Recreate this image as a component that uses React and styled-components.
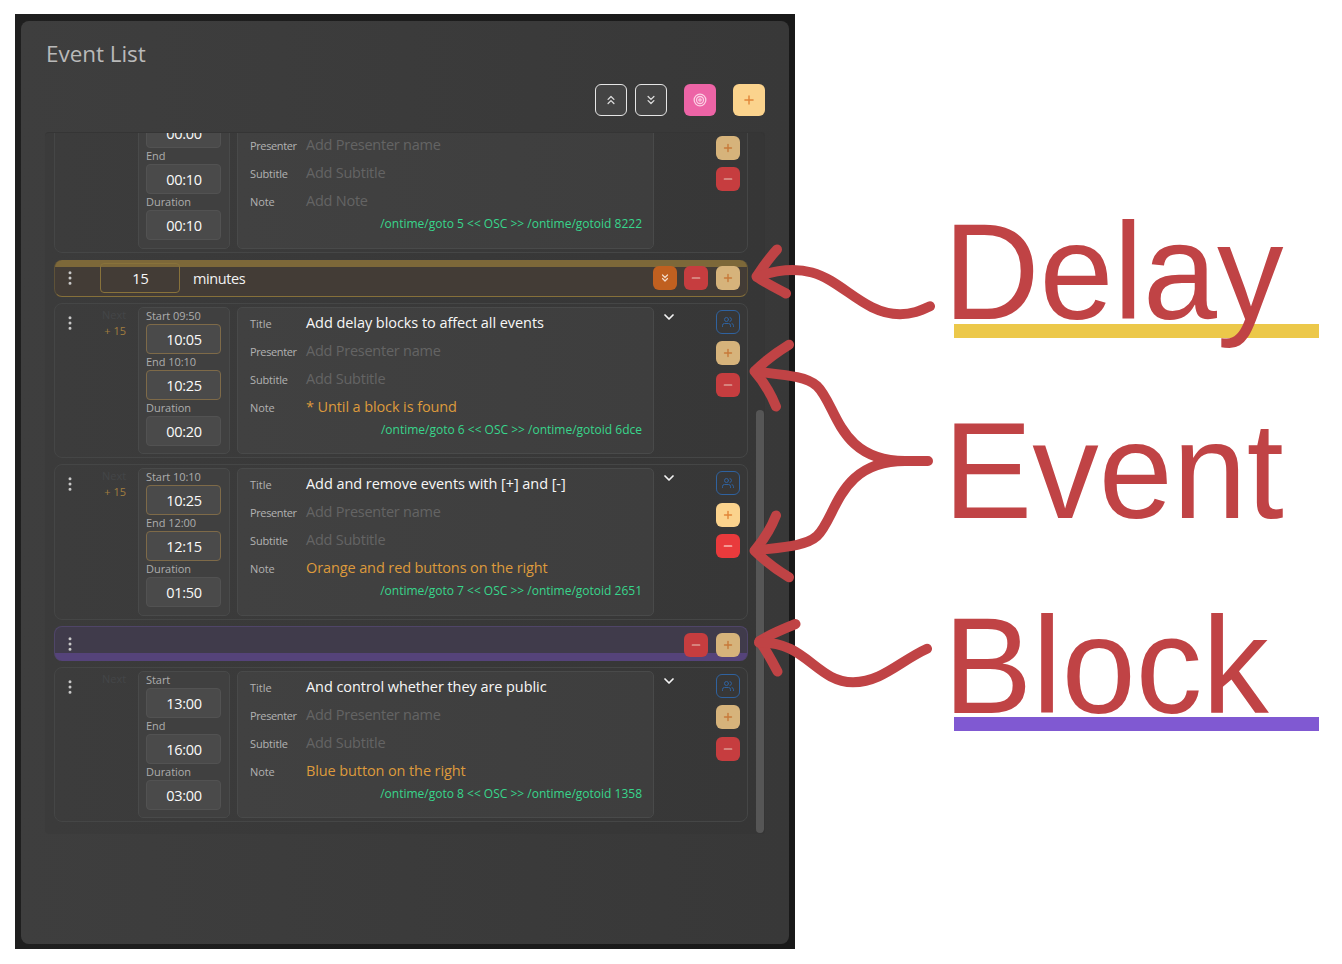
import React from 'react';
import styled, { createGlobalStyle, css } from 'styled-components';
import { FiPlus, FiMinus, FiUsers, FiChevronsUp, FiChevronsDown, FiChevronDown, FiMoreVertical, FiTarget } from 'react-icons/fi';

const GlobalStyle = createGlobalStyle`
  * { box-sizing: border-box; }
  body {
    margin: 0;
    background: #fff;
    font-family: "Open Sans", "Noto Sans", sans-serif;
    overflow: hidden;
  }
`;

const Page = styled.main`
  position: relative;
  display: flex;
  align-items: flex-start;
  width: 1342px;
  height: 964px;
  padding: 14px 0 0 15px;
`;

const Frame = styled.section`
  flex: none;
  width: 780px;
  height: 935px;
  padding: 7px 6px 5px;
  background: linear-gradient(90deg, #1f1f1f, #191919);
`;

const Panel = styled.div`
  height: 923px;
  padding: 18px 24px 0;
  border-radius: 8px;
  background: linear-gradient(90deg, #3e3e3e, #383838);
`;

const Heading = styled.h1`
  margin: 0 0 0 1px;
  font-size: 22.5px;
  font-weight: 400;
  line-height: 30px;
  letter-spacing: -0.05px;
  color: #b9b9b9;
`;

const Toolbar = styled.div`
  display: flex;
  justify-content: flex-end;
  margin-top: 15px;
  height: 32px;
`;

const tones = {
  outline: css`background: #444; border: 1px solid #e6e6e6; color: #ddd;`,
  pink: css`background: #ed64a6; color: #fbd0e4;`,
  amber: css`background: #fbd38d; color: #e18538;`,
  amberDim: css`background: #d6b37b; color: #c77a3a;`,
  red: css`background: #e93a3c; color: #f7b8b0;`,
  redDim: css`background: #c63d3f; color: #dd9a92;`,
  orange: css`background: #c06020; color: #f3dccb;`,
  blue: css`background: transparent; border: 1px solid #2f629f; color: #2f629f;`,
};

const IconButton = styled.button`
  display: flex;
  align-items: center;
  justify-content: center;
  flex: none;
  width: ${(p) => p.$size || 24}px;
  height: ${(p) => p.$size || 24}px;
  margin: ${(p) => p.$top || 0}px 0 0 ${(p) => p.$left || 0}px;
  padding: 0;
  border: 0;
  border-radius: 6px;
  ${(p) => tones[p.$tone]}
`;

const List = styled.div`
  position: relative;
  width: 720px;
  height: 702px;
  margin-top: 16px;
  padding: 0 9px;
  overflow: hidden;
  border: 1px solid #353535;
  border-width: 1px 1px 0 0;
  border-radius: 4px;
  background: linear-gradient(90deg, #3b3b3b, #363636);
`;

const Entries = styled.div`
  display: flex;
  flex-direction: column;
  width: 694px;
  margin-top: -36px;
`;

const ScrollThumb = styled.div`
  position: absolute;
  right: 0;
  bottom: 1px;
  width: 8px;
  height: 423px;
  border-radius: 4px;
  background: #565656;
`;

const Card = styled.article`
  display: flex;
  flex: none;
  height: ${(p) => (p.$tall ? 156 : 155)}px;
  margin-bottom: ${(p) => p.$gap || 6}px;
  padding: 3px 7px 3px 6px;
  border: 1px solid #454646;
  border-radius: 8px;
  background: linear-gradient(90deg, #3c3c3c, #373737);
`;

const Handle = styled.div`
  flex: none;
  width: 18px;
  height: 18px;
  margin-top: ${(p) => p.$top}px;
  padding-left: 0.25px;
  color: #c9c9c9;
`;

const Status = styled.div`
  flex: none;
  width: 24px;
  margin: 0 13px 0 23px;
  font-size: 11px;
  line-height: 16px;
  text-align: right;
  white-space: nowrap;
`;

const NextLabel = styled.div`
  color: #444648;
`;

const DelayLabel = styled.div`
  color: #a17d3f;
`;

const TimesBox = styled.div`
  flex: none;
  width: 92px;
  padding: 0 7px;
  margin-left: -1px;
  border: 1px solid #494a4a;
  border-radius: 5px;
  background: #404040;
`;

const TimeLabel = styled.div`
  height: 16px;
  font-size: 11px;
  line-height: 16px;
  letter-spacing: -0.05px;
  white-space: nowrap;
  color: #adadad;
`;

const TimeField = styled.div`
  width: 75px;
  height: 30px;
  border: 1px solid ${(p) => (p.$delayed ? '#7e6a48' : '#525252')};
  border-radius: 4px;
  background: #4a4a4a;
  color: #fafafa;
  font-size: 14.5px;
  line-height: 29px;
  letter-spacing: -0.25px;
  text-align: center;
  text-indent: 1px;
`;

const Details = styled.div`
  flex: none;
  width: 417px;
  margin-left: 7px;
  padding: 0 11px 0 12px;
  border: 1px solid #494a4a;
  border-radius: 5px;
  background: linear-gradient(90deg, #414141, #3e3e3e);
`;

const DetailRow = styled.div`
  display: flex;
  align-items: center;
  height: 28px;
`;

const DetailLabel = styled.span`
  width: 56px;
  padding-top: 2px;
  font-size: 11px;
  letter-spacing: ${(p) => p.$spacing || 0}px;
  color: #b2b2b2;
`;

const values = {
  empty: css`color: #646464; letter-spacing: -0.24px;`,
  filled: css`color: #f7f7f7; letter-spacing: -0.06px;`,
  note: css`color: #dd9a3c; letter-spacing: -0.11px;`,
};

const DetailValue = styled.span`
  font-size: 14.5px;
  white-space: nowrap;
  ${(p) => values[p.$kind]}
`;

const OscLine = styled.div`
  height: 20px;
  margin-top: 1px;
  font-size: 12px;
  line-height: 18px;
  text-align: right;
  white-space: nowrap;
  color: #38d68c;
`;

const Expand = styled.div`
  display: flex;
  margin: 2px 0 0 7px;
  color: #f4f4f4;
`;

const Actions = styled.div`
  margin: 3px 0 0 auto;
`;

const DelayBar = styled.div`
  display: flex;
  flex: none;
  height: 37px;
  margin-bottom: 6px;
  padding: 0 7px 0 6px;
  border: 1px solid #5e5238;
  border-bottom-color: #86703a;
  border-top: 0;
  border-radius: 8px;
  background: linear-gradient(180deg, #7d6839 0 7px, #433c36 7px);
`;

const DelayInput = styled.div`
  flex: none;
  width: 80px;
  height: 30px;
  margin: 3px 13px 0 21px;
  border: 1px solid #88723b;
  border-radius: 4px;
  color: #fafafa;
  font-size: 14.5px;
  line-height: 29px;
  text-align: center;
  text-indent: 1px;
`;

const DelayUnit = styled.span`
  font-size: 14.5px;
  line-height: 37px;
  letter-spacing: -0.4px;
  color: #f2f2f2;
`;

const BlockBar = styled.div`
  display: flex;
  flex: none;
  height: 35px;
  margin-bottom: 6px;
  padding: 0 7px 0 6px;
  border: 1px solid #4f4568;
  border-bottom: 0;
  border-radius: 8px;
  background: linear-gradient(180deg, #403b4b 0 26px, #55437a 26px);
`;

const BarActions = styled.div`
  display: flex;
  margin: ${(p) => p.$top}px 0 0 auto;
`;

const Legend = styled.aside`
  flex: none;
  width: 376px;
  margin-left: 147.5px;
  padding-top: 208.7px;
  font-family: "Liberation Sans", Arial, sans-serif;
`;

const Word = styled.div`
  position: relative;
  z-index: 1;
  height: 100px;
  margin-top: ${(p) => p.$top || 0}px;
  padding-left: 1px;
  font-size: 133px;
  line-height: 100px;
  color: #c04345;
  transform: scaleY(1.035);
  transform-origin: 0 96px;
`;

const Underline = styled.div`
  width: 365px;
  height: 14px;
  margin: ${(p) => p.$gap}px 0 0 11px;
  background: ${(p) => p.$color};
`;

const Arrows = styled.svg`
  position: absolute;
  left: 0;
  top: 0;
  pointer-events: none;
`;

const Dots = ({ top }) => (
  <Handle $top={top}>
    <FiMoreVertical size={18} />
  </Handle>
);

function EventCard({ tall, gap, delay, bright, next = true, start, end, duration, title, note, osc }) {
  return (
    <Card $tall={tall} $gap={gap}>
      <Dots top={6.5} />
      <Status>
        <NextLabel>{next ? 'Next' : ''}</NextLabel>
        {delay && <DelayLabel>{delay}</DelayLabel>}
      </Status>
      <TimesBox>
        <TimeLabel>{start[0]}</TimeLabel>
        <TimeField $delayed={!!delay}>{start[1]}</TimeField>
        <TimeLabel>{end[0]}</TimeLabel>
        <TimeField $delayed={!!delay}>{end[1]}</TimeField>
        <TimeLabel>Duration</TimeLabel>
        <TimeField>{duration}</TimeField>
      </TimesBox>
      <Details>
        <DetailRow>
          <DetailLabel>Title</DetailLabel>
          <DetailValue $kind="filled">{title}</DetailValue>
        </DetailRow>
        <DetailRow>
          <DetailLabel $spacing={-0.38}>Presenter</DetailLabel>
          <DetailValue $kind="empty">Add Presenter name</DetailValue>
        </DetailRow>
        <DetailRow>
          <DetailLabel $spacing={-0.15}>Subtitle</DetailLabel>
          <DetailValue $kind="empty">Add Subtitle</DetailValue>
        </DetailRow>
        <DetailRow>
          <DetailLabel $spacing={-0.1}>Note</DetailLabel>
          <DetailValue $kind={note ? 'note' : 'empty'}>{note || 'Add Note'}</DetailValue>
        </DetailRow>
        <OscLine>{osc}</OscLine>
      </Details>
      <Expand>
        <FiChevronDown size={16} strokeWidth={2.6} />
      </Expand>
      <Actions>
        <IconButton $tone="blue"><FiUsers size={12} strokeWidth={2} /></IconButton>
        <IconButton $tone={bright ? 'amber' : 'amberDim'} $top={tall ? 8 : 7}><FiPlus size={12} strokeWidth={2.8} /></IconButton>
        <IconButton $tone={bright ? 'red' : 'redDim'} $top={tall ? 7 : 8}><FiMinus size={12} strokeWidth={3.4} /></IconButton>
      </Actions>
    </Card>
  );
}

export default function App() {
  return (
    <>
      <GlobalStyle />
      <Page>
        <Frame>
          <Panel>
            <Heading>Event List</Heading>
            <Toolbar>
              <IconButton $size={32} $tone="outline"><FiChevronsUp size={14} strokeWidth={2.2} /></IconButton>
              <IconButton $size={32} $left={8} $tone="outline"><FiChevronsDown size={14} strokeWidth={2.2} /></IconButton>
              <IconButton $size={32} $left={17} $tone="pink"><FiTarget size={14} strokeWidth={2.2} /></IconButton>
              <IconButton $size={32} $left={17} $tone="amber"><FiPlus size={14} strokeWidth={2.4} /></IconButton>
            </Toolbar>
            <List>
              <Entries>
                <EventCard
                  tall
                  gap={7}
                  next={false}
                  start={['Start', '00:00']}
                  end={['End', '00:10']}
                  duration="00:10"
                  title=""
                  osc="/ontime/goto 5 << OSC >> /ontime/gotoid 8222"
                />
                <DelayBar>
                  <Dots top={8.5} />
                  <DelayInput>15</DelayInput>
                  <DelayUnit>minutes</DelayUnit>
                  <BarActions $top={6}>
                    <IconButton $tone="orange"><FiChevronsDown size={12} strokeWidth={2.4} /></IconButton>
                    <IconButton $left={7} $tone="redDim"><FiMinus size={12} strokeWidth={3.4} /></IconButton>
                    <IconButton $left={8} $tone="amberDim"><FiPlus size={12} strokeWidth={2.8} /></IconButton>
                  </BarActions>
                </DelayBar>
                <EventCard
                  delay="+ 15"
                  start={['Start 09:50', '10:05']}
                  end={['End 10:10', '10:25']}
                  duration="00:20"
                  title="Add delay blocks to affect all events"
                  note="* Until a block is found"
                  osc="/ontime/goto 6 << OSC >> /ontime/gotoid 6dce"
                />
                <EventCard
                  tall
                  bright
                  delay="+ 15"
                  start={['Start 10:10', '10:25']}
                  end={['End 12:00', '12:15']}
                  duration="01:50"
                  title="Add and remove events with [+] and [-]"
                  note="Orange and red buttons on the right"
                  osc="/ontime/goto 7 << OSC >> /ontime/gotoid 2651"
                />
                <BlockBar>
                  <Dots top={7.5} />
                  <BarActions $top={6}>
                    <IconButton $tone="redDim"><FiMinus size={12} strokeWidth={3.4} /></IconButton>
                    <IconButton $left={8} $tone="amberDim"><FiPlus size={12} strokeWidth={2.8} /></IconButton>
                  </BarActions>
                </BlockBar>
                <EventCard
                  start={['Start', '13:00']}
                  end={['End', '16:00']}
                  duration="03:00"
                  title="And control whether they are public"
                  note="Blue button on the right"
                  osc="/ontime/goto 8 << OSC >> /ontime/gotoid 1358"
                />
              </Entries>
              <ScrollThumb />
            </List>
          </Panel>
        </Frame>
        <Legend>
          <Word>Delay</Word>
          <Underline $gap={1.3} $color="#ecc84a" />
          <Word $top={83.7}>Event</Word>
          <Word $top={95.7}>Block</Word>
          <Underline $gap={0} $color="#8059d2" />
        </Legend>
        <Arrows width="1342" height="964" fill="none" stroke="#c04345" strokeWidth="10" strokeLinecap="round" strokeLinejoin="round">
          <path d="M777 249.5C769 258 763 267 756.5 276.5C765 283 776 288 786 293.5" />
          <path d="M757 277C776 270 795 268 812 272.5C843 281 864 314 900 314.3C912 314.3 920 311 930 306.3" />
          <path d="M789 344.7C777 352 765 361 754.5 371.3C763 381 771 394 776 406.5" />
          <path d="M755 371.5C784 375 806 376 817 386C837 405 838 461 905 461H928" />
          <path d="M789 577.3C777 570 765 561 754.5 550.7C763 541 771 528 776 515.5" />
          <path d="M755 550.5C784 547 806 546 817 536C837 517 838 461 905 461" />
          <path d="M795.5 624C783 629 769 635 759.5 641C766 650 772 661 777.5 671.5" />
          <path d="M759 642.5C806 641 816 682 853 682.3C882 682 900 661 927 648.8" />
        </Arrows>
      </Page>
    </>
  );
}
